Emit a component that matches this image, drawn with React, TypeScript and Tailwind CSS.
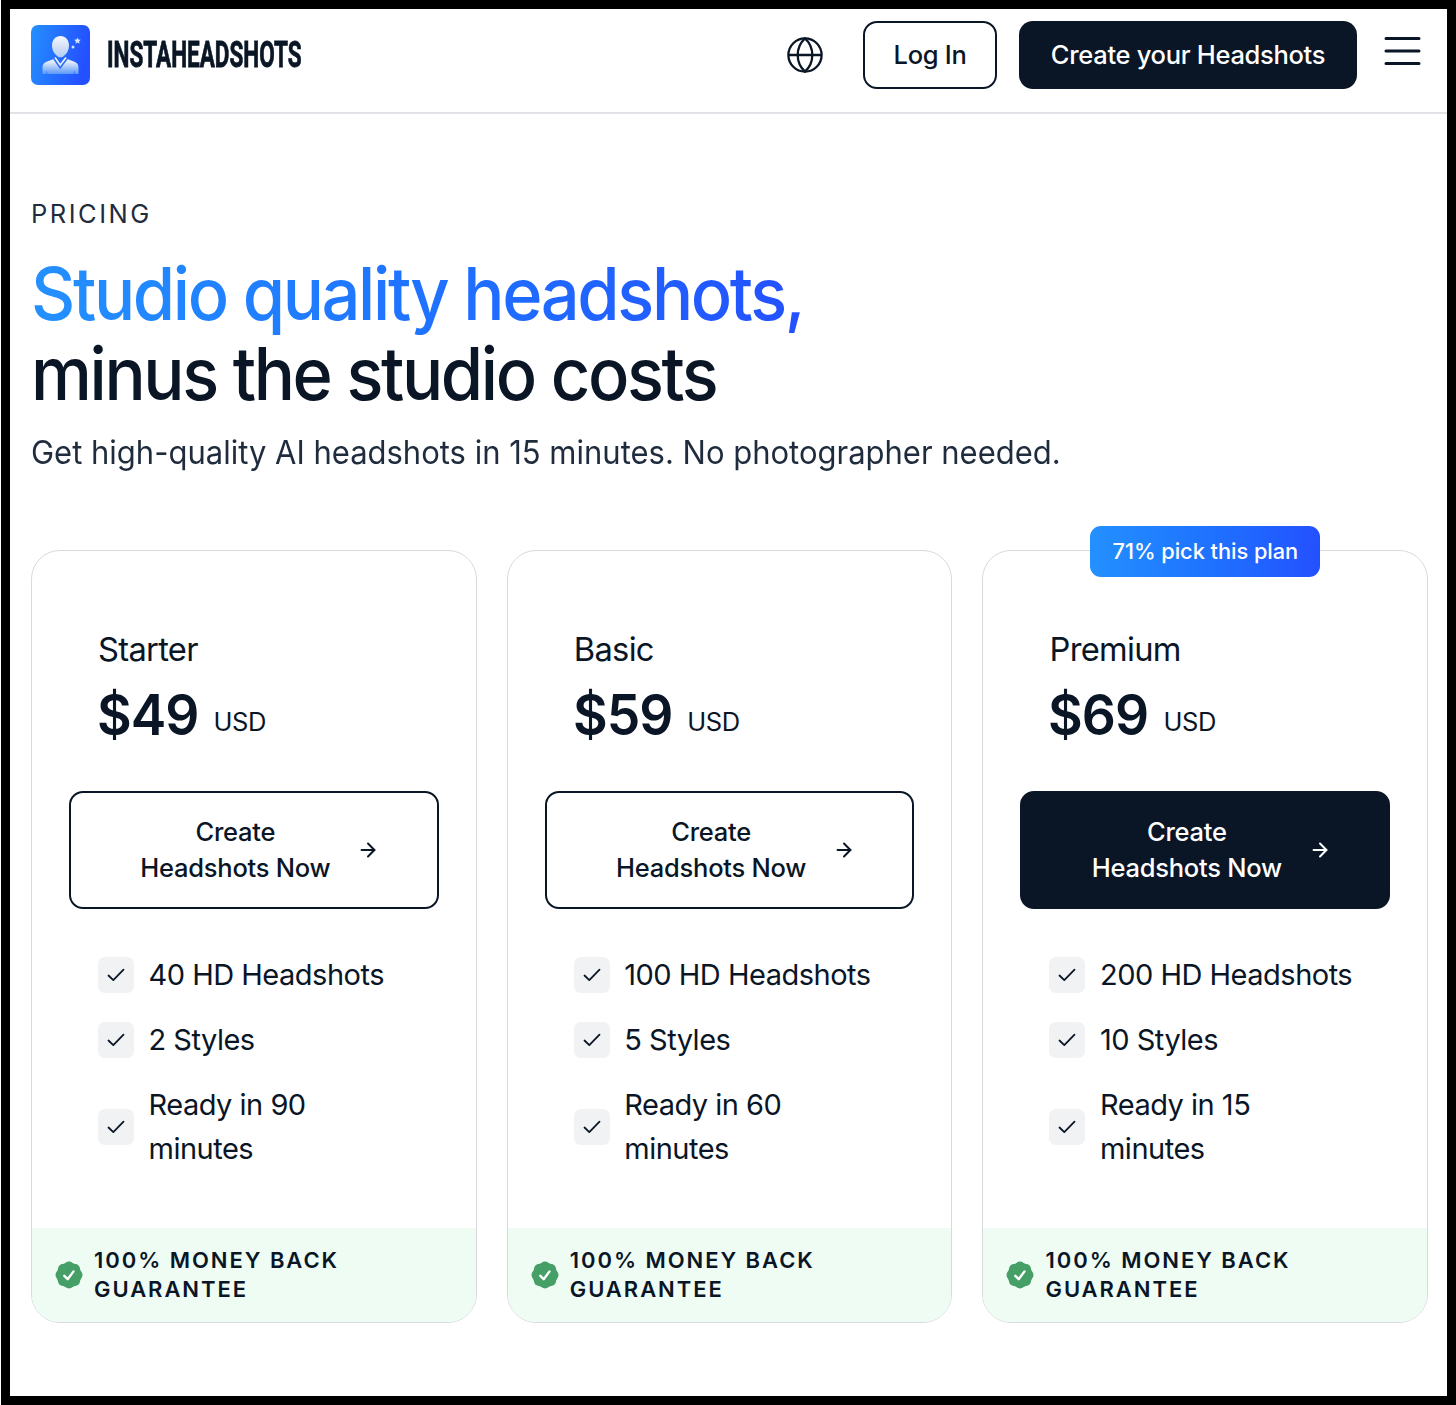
import { ArrowRight } from 'lucide-react';
import clsx from 'clsx';

interface Plan {
  name: string;
  price: string;
  features: string[];
  badge?: string;
}

const PLANS: Plan[] = [
  { name: 'Starter', price: '$49', features: ['40 HD Headshots', '2 Styles', 'Ready in 90 minutes'] },
  { name: 'Basic', price: '$59', features: ['100 HD Headshots', '5 Styles', 'Ready in 60 minutes'] },
  {
    name: 'Premium',
    price: '$69',
    features: ['200 HD Headshots', '10 Styles', 'Ready in 15 minutes'],
    badge: '71% pick this plan',
  },
];

function Logo() {
  return (
    <div className="flex items-center gap-[17px]">
      <svg width="59" height="60" viewBox="0 0 59 60">
        <defs>
          <linearGradient id="logo-bg" x1="0" y1="0" x2="1" y2="0.2">
            <stop offset="0" stopColor="#2490ff" />
            <stop offset="1" stopColor="#2450ff" />
          </linearGradient>
          <linearGradient id="logo-head" x1="0" y1="0" x2="0" y2="1">
            <stop offset="0" stopColor="#f4f8fc" />
            <stop offset="1" stopColor="#b5ccef" />
          </linearGradient>
          <linearGradient id="logo-body" x1="0" y1="0" x2="0" y2="1">
            <stop offset="0.2" stopColor="#e2ebf8" />
            <stop offset="1" stopColor="#5b98fb" />
          </linearGradient>
        </defs>
        <rect width="59" height="60" rx="7" fill="url(#logo-bg)" />
        <path
          d="M29.500 11c5 0 8.500 4 8.500 9.500 0 4-1.500 7-3.800 9.200-1.500 1.600-2.800 2.600-4.700 2.600s-3.200-1-4.700-2.600c-2.300-2.200-3.800-5.200-3.800-9.200C21 15 24.500 11 29.500 11z"
          fill="url(#logo-head)"
        />
        <path
          d="M22.500 34l6.500 9 7.500-9 7.500 3c2.500 1 3.500 3 3.500 5.500V49h-4v-4l-1 4h-26l-1-4v4h-4v-6.500c0-2.500 1-4.500 3.500-5.500z"
          fill="url(#logo-body)"
        />
        <path d="M23.500 33l5.700 8.500L35.500 33" fill="none" stroke="#2f72ff" strokeWidth="3.200" />
        <path d="M24 32.500l5.200 7.500 5.800-7.500" fill="none" stroke="#eef4fd" strokeWidth="1.600" />
        <path d="M46.500 12.500l1 2 2.300.3-1.700 1.600.4 2.300-2-1.100-2 1.100.4-2.300-1.700-1.600 2.300-.3z" fill="#d5e3fb" />
        <circle cx="42" cy="22" r="1.500" fill="#d5e3fb" />
      </svg>
      <span className="block w-[195px] origin-left scale-x-[0.608] whitespace-nowrap font-['Roboto',sans-serif] text-[37px] font-bold leading-[58px] [-webkit-text-stroke:0.8px_#0a1626]">
        INSTAHEADSHOTS
      </span>
    </div>
  );
}

function GlobeIcon() {
  return (
    <svg width="36" height="36" viewBox="0 0 36 36" fill="none" stroke="#0a1626" strokeWidth="2.300">
      <circle cx="18" cy="18" r="16.600" />
      <path d="M18 1.400c5 4.600 7.300 10.400 7.300 16.600S23 30 18 34.600C13 30 10.700 24.200 10.700 18S13 6 18 1.400z" />
      <path d="M1.400 18h33.200" />
    </svg>
  );
}

function MenuIcon() {
  return (
    <svg width="37" height="30" viewBox="0 0 37 30" stroke="#0a1626" strokeWidth="3" strokeLinecap="round">
      <path d="M2 2.500h33M2 15h33M2 27.500h33" />
    </svg>
  );
}

function Header() {
  return (
    <header className="flex h-[105px] justify-between border-b-2 border-[#e1e1e6] pl-[21px] pr-[26px] pt-3">
      <div className="pt-1">
        <Logo />
      </div>
      <div className="flex items-start">
        <div className="mr-10 mt-4">
          <GlobeIcon />
        </div>
        <button className="mr-[22px] h-[68px] w-[134px] rounded-[14px] border-2 border-[#0a1626] text-[25.500px] font-medium tracking-[-0.3px]">
          Log In
        </button>
        <button className="mr-[27px] h-[68px] w-[338px] rounded-[14px] bg-[#0a1626] text-[25.500px] font-medium tracking-[-0.3px] text-white">
          Create your Headshots
        </button>
        <div className="mt-[15px]">
          <MenuIcon />
        </div>
      </div>
    </header>
  );
}

function FeatureRow({ label }: { label: string }) {
  return (
    <li className="flex items-center gap-[14.500px]">
      <span className="flex size-9 shrink-0 items-center justify-center rounded-[7px] bg-[#f1f2f4]">
        <svg width="18" height="14" viewBox="0 0 18 14" fill="none" stroke="#0a1626" strokeWidth="1.800">
          <path d="M1.500 7.500l4.800 4.600L16.500 1.700" strokeLinecap="round" strokeLinejoin="round" />
        </svg>
      </span>
      <span>{label}</span>
    </li>
  );
}

function SealIcon() {
  return (
    <svg width="28" height="28" viewBox="0 0 28 28" className="shrink-0">
      <g fill="#459f66">
        <circle cx="14" cy="14" r="12.500" />
        <circle cx="14" cy="5.500" r="5" />
        <circle cx="20" cy="8" r="5" />
        <circle cx="22.500" cy="14" r="5" />
        <circle cx="20" cy="20" r="5" />
        <circle cx="14" cy="22.500" r="5" />
        <circle cx="8" cy="20" r="5" />
        <circle cx="5.500" cy="14" r="5" />
        <circle cx="8" cy="8" r="5" />
      </g>
      <path
        d="M9.300 14.800l3.400 3.400 5.800-7.800"
        fill="none"
        stroke="white"
        strokeWidth="2.400"
        strokeLinecap="round"
        strokeLinejoin="round"
      />
    </svg>
  );
}

function PlanCard({ plan }: { plan: Plan }) {
  const highlighted = Boolean(plan.badge);
  return (
    <div className="relative flex h-[773px] flex-col rounded-[29px] border-[1.500px] border-[#d8dade]">
      {plan.badge && (
        <span className="absolute -top-[25px] left-1/2 flex h-[51px] w-[230px] -translate-x-1/2 items-center justify-center whitespace-nowrap rounded-[11px] bg-linear-to-r from-[#2490ff] to-[#2450ff] text-[21.800px] font-medium tracking-[-0.05px] text-white">
          {plan.badge}
        </span>
      )}
      <div className="px-[66px] pt-[76px]">
        <h3 className="text-[32.700px] leading-[44px] tracking-[-0.7px]">{plan.name}</h3>
        <p className="flex h-[88px] items-center gap-[10px]">
          <span className="-ml-px origin-left scale-x-[0.953] text-[56px] font-semibold tracking-[-1px]">
            {plan.price}
          </span>
          <span className="mt-3.5 text-[25.500px] tracking-[-0.4px]">USD</span>
        </p>
      </div>
      <button
        className={clsx(
          'mx-[37px] mt-8 flex h-[118px] shrink-0 items-center justify-center gap-[27px] rounded-[14px] border-2 border-[#0a1626] pl-3 text-[25.500px] font-medium leading-[36.400px] tracking-[-0.25px]',
          highlighted && 'bg-[#0a1626] text-white'
        )}
      >
        <span className="w-[190px] whitespace-nowrap">
          Create
          <br />
          Headshots Now
        </span>
        <ArrowRight size={22} strokeWidth={2.200} />
      </button>
      <ul className="flex flex-col gap-[21.600px] pl-[66px] pr-[74px] pt-11 text-[29px] leading-[43.600px] tracking-[-0.5px]">
        {plan.features.map((f) => (
          <FeatureRow key={f} label={f} />
        ))}
      </ul>
      <div className="mt-auto flex h-[94px] items-center gap-[11px] rounded-b-[27px] bg-[#effcf4] pl-[23px] text-[22px] font-semibold uppercase leading-[29px] tracking-[1.950px]">
        <SealIcon />
        <span>
          100% Money Back
          <br />
          Guarantee
        </span>
      </div>
    </div>
  );
}

export default function App() {
  return (
    <div className="h-[1405px] w-[1456px] overflow-hidden border-l border-white bg-black p-[9px] font-['Inter',sans-serif] text-[#0a1626]">
      <div className="h-full bg-white">
        <Header />
        <main className="pl-[21px] pr-[18.800px] pt-[82px]">
          <p className="text-[25.500px] leading-9 tracking-[2.500px] text-[#1f2c3d]">PRICING</p>
          <h1 className="mt-[22px] origin-left scale-x-[0.943] text-[72.700px] font-medium leading-[80px] tracking-[-2.500px]">
            <span className="bg-linear-to-r from-[#2490ff] to-[#2450ff] bg-clip-text text-transparent">
              Studio quality headshots,
            </span>
            <br />
            minus the studio costs
          </h1>
          <p className="mt-[14px] origin-left scale-x-[0.948] text-[32.700px] leading-[48px] text-[#1f2c3d]">
            Get high-quality AI headshots in 15 minutes. No photographer needed.
          </p>
          <section className="mt-[74px] grid grid-cols-3 gap-[30px]">
            {PLANS.map((p) => (
              <PlanCard key={p.name} plan={p} />
            ))}
          </section>
        </main>
      </div>
    </div>
  );
}
